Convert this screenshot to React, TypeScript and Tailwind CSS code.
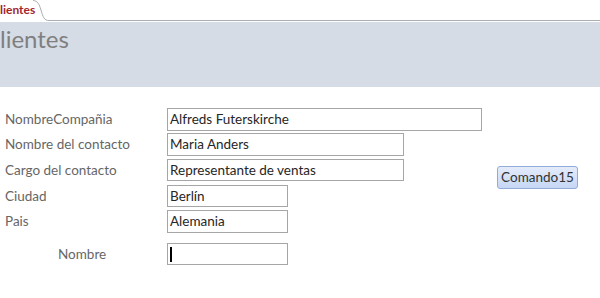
import React from 'react';

const font = { fontFamily: 'Lato, "Open Sans", sans-serif' };

const fields = [
  { label: 'NombreCompañia', value: 'Alfreds Futerskirche', w: 'w-[315px]', mt: 'mt-0', h: 'h-[23px]' },
  { label: 'Nombre del contacto', value: 'Maria Anders', w: 'w-[237px]', mt: 'mt-[2px]', h: 'h-[23px]' },
  { label: 'Cargo del contacto', value: 'Representante de ventas', w: 'w-[237px]', mt: 'mt-[3px]', h: 'h-[22px]' },
  { label: 'Ciudad', value: 'Berlín', w: 'w-[121px]', mt: 'mt-[4px]', h: 'h-[22px]' },
  { label: 'Pais', value: 'Alemania', w: 'w-[121px]', mt: 'mt-[3px]', h: 'h-[23px]' },
];

const TabBar = () => (
  <div className="relative h-[22px] bg-white">
    <div className="absolute left-0 top-0 h-[21px] w-[34px] bg-white pt-[1px] text-[12px] font-bold leading-[17px] text-[#a4262c]">
      lientes
    </div>
    <svg className="absolute left-0 top-0" width="600" height="22" viewBox="0 0 600 22">
      <path d="M33 0.5 C38 1 39 4 41 10 C43 17 44 20.5 49 20.5 L600 20.5" fill="none" stroke="#a9adb4" strokeWidth="1" />
    </svg>
  </div>
);

export default function App() {
  return (
    <div className="h-[298px] w-[600px] overflow-hidden bg-white" style={font}>
      <TabBar />
      <div className="h-[65px] bg-[#d6dce5] pt-[1px] text-[24px] leading-[32px] text-[#7f7f7f]">
        lientes
      </div>
      <div className="flex pt-[21px]">
        <div className="flex flex-col">
          {fields.map((f) => (
            <div key={f.label} className={`flex items-center ${f.mt}`}>
              <div className="w-[167px] pl-[5px] text-[13.5px] leading-[17px] text-[#666666]">{f.label}</div>
              <div
                className={`${f.w} ${f.h} border border-[#a6a6a6] px-[2px] text-[13.5px] leading-[20px] text-[#262626]`}
              >
                {f.value}
              </div>
            </div>
          ))}
          <div className="mt-[10px] flex items-center">
            <div className="w-[167px] pl-[58px] text-[13.5px] leading-[17px] text-[#666666]">Nombre</div>
            <div className="flex h-[22px] w-[121px] items-center border border-[#a6a6a6] px-[2px]">
              <div className="h-[15px] w-[1.5px] bg-black" />
            </div>
          </div>
        </div>
        <div className="ml-[15px] mt-[56px]">
          <button className="h-[23px] w-[81px] rounded-[3px] border border-[#92abd8] bg-gradient-to-b from-[#e4ecfb] to-[#c6d7f4] text-[13.5px] leading-[18px] text-[#333333]">
            Comando15
          </button>
        </div>
      </div>
    </div>
  );
}
